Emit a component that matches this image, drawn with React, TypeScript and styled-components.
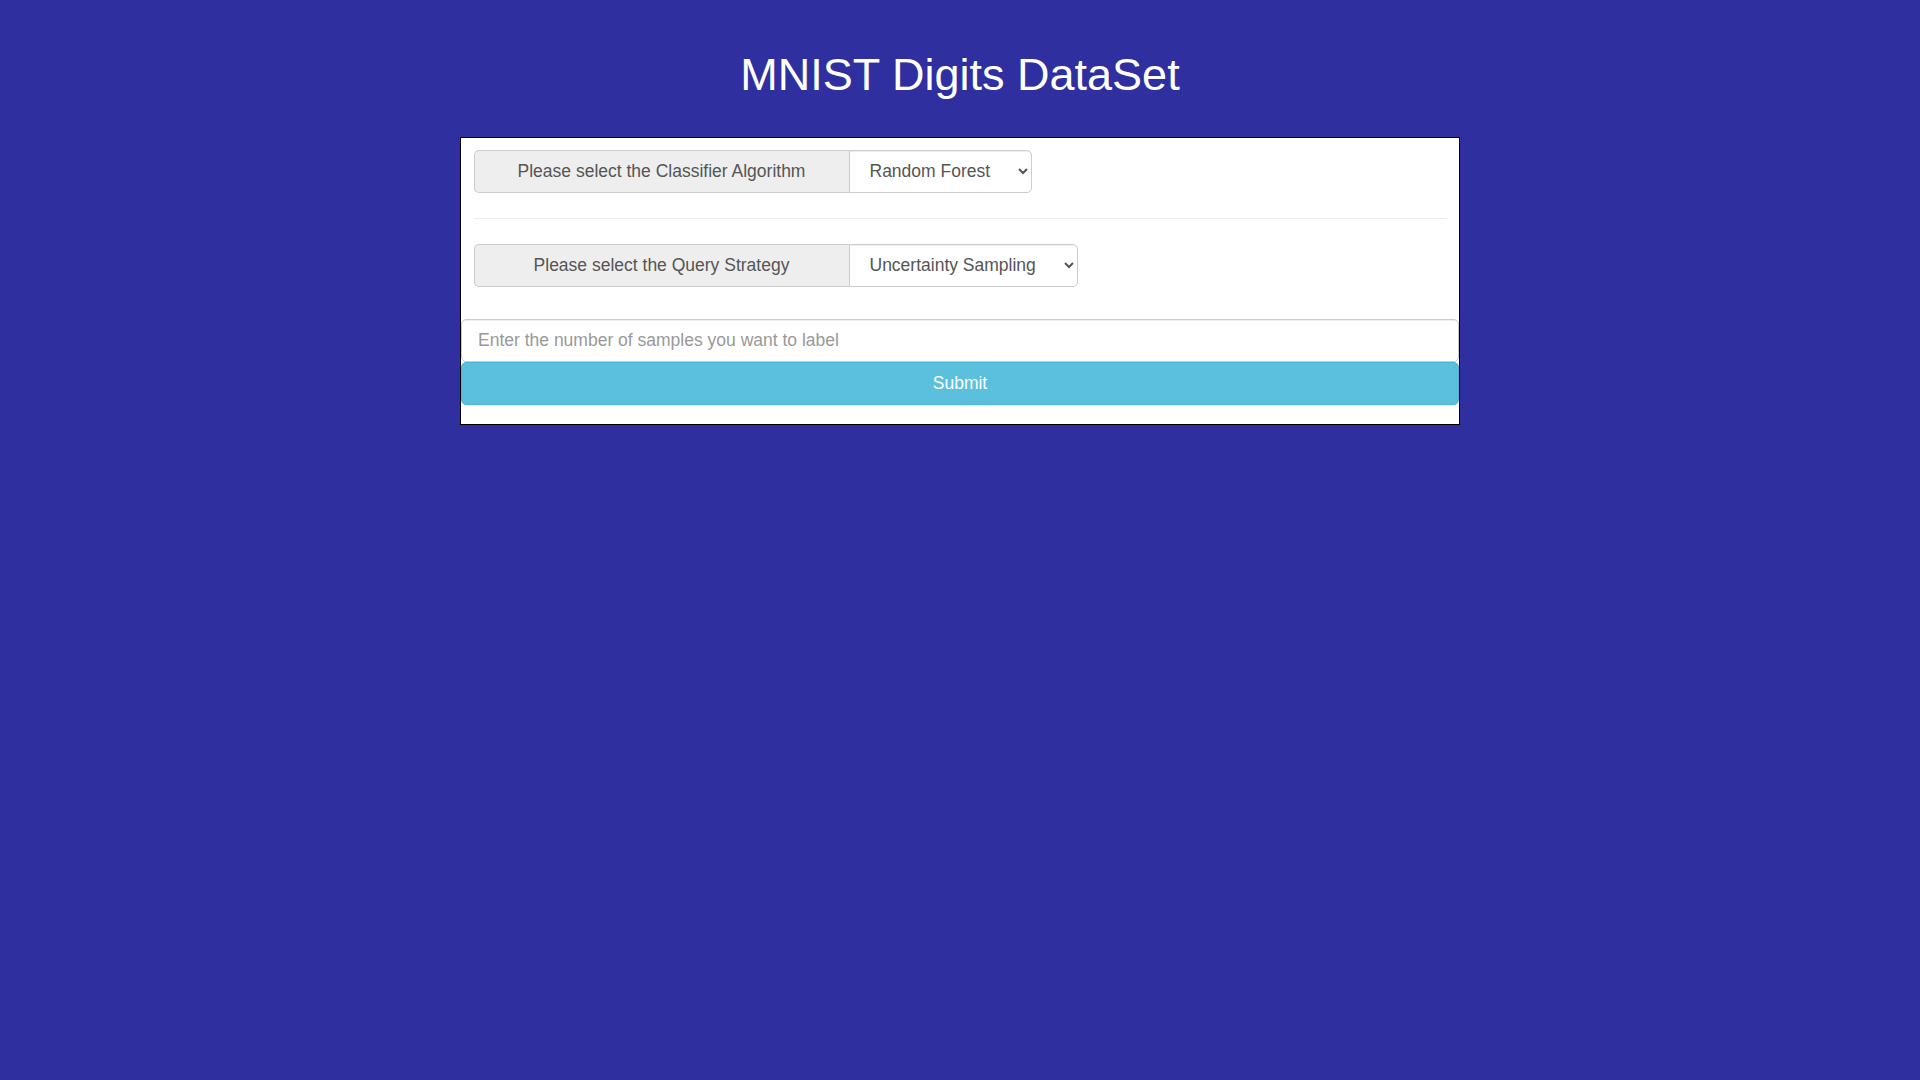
import React from 'react';
import styled, { createGlobalStyle } from 'styled-components';

const GlobalStyle = createGlobalStyle`
  html, body {
    margin: 0;
    padding: 0;
    background: #2f2fa0;
  }
  body {
    font-family: "Liberation Sans", Arial, Helvetica, sans-serif;
    font-size: 17.5px;
    line-height: 1.42857;
    color: #333;
  }
  * {
    box-sizing: border-box;
  }
`;

const Page = styled.div`
  min-height: 100vh;
  padding: 1px 0;
`;

const Title = styled.h1`
  margin: 49px 0 37px;
  font-size: 45px;
  font-weight: 500;
  line-height: 1.1;
  color: #fff;
  text-align: center;
`;

const Panel = styled.div`
  width: 1000px;
  margin: 0 auto;
  background: #fff;
  border: 1px solid #000;
  padding-bottom: 19px;
`;

const Options = styled.div`
  padding: 12px 12.5px 32px;
`;

const InputGroup = styled.div`
  display: flex;
  height: 43px;
`;

const Addon = styled.span`
  display: flex;
  align-items: center;
  justify-content: center;
  width: 375px;
  background: #eee;
  color: #555;
  border: 1px solid #ccc;
  border-right: 0;
  border-radius: 5px 0 0 5px;
  font-size: 17.5px;
`;

const Select = styled.select`
  height: 100%;
  padding: 7.5px 24px 7.5px 16px;
  font-family: "Liberation Sans", Arial, sans-serif;
  font-size: 17.5px;
  color: #555;
  background: #fff;
  border: 1px solid #ccc;
  border-radius: 0 5px 5px 0;
  box-shadow: inset 0 1px 1px rgba(0, 0, 0, 0.075);
  outline: none;
`;

const Divider = styled.hr`
  margin: 25px 0;
  border: 0;
  border-top: 1px solid #eee;
`;

const NumberInput = styled.input`
  display: block;
  width: 100%;
  height: 43px;
  padding: 7.5px 16px;
  font-family: "Liberation Sans", Arial, sans-serif;
  font-size: 17.5px;
  color: #555;
  background: #fff;
  border: 1px solid #ccc;
  border-radius: 5px;
  box-shadow: inset 0 1px 1px rgba(0, 0, 0, 0.075);
  outline: none;

  &::placeholder {
    color: #999;
  }
`;

const SubmitButton = styled.button`
  display: block;
  width: 100%;
  height: 43px;
  margin: 0;
  font-family: "Liberation Sans", Arial, sans-serif;
  font-size: 17.5px;
  color: #fff;
  background: #5bc0de;
  border: 1px solid #46b8da;
  border-radius: 5px;
  cursor: pointer;
`;

type ChoiceProps = {
  label: string;
  options: string[];
};

const Choice: React.FC<ChoiceProps> = ({ label, options }) => (
  <InputGroup>
    <Addon>{label}</Addon>
    <Select defaultValue={options[0]}>
      {options.map((o) => (
        <option key={o}>{o}</option>
      ))}
    </Select>
  </InputGroup>
);

export default function App() {
  return (
    <Page>
      <GlobalStyle />
      <Title>MNIST Digits DataSet</Title>
      <Panel>
        <Options>
          <Choice
            label="Please select the Classifier Algorithm"
            options={['Random Forest', 'SVM', 'KNN']}
          />
          <Divider />
          <Choice
            label="Please select the Query Strategy"
            options={['Uncertainty Sampling', 'Random Sampling', 'Margin Sampling']}
          />
        </Options>
        <NumberInput
          type="number"
          placeholder="Enter the number of samples you want to label"
        />
        <SubmitButton type="submit">Submit</SubmitButton>
      </Panel>
    </Page>
  );
}
